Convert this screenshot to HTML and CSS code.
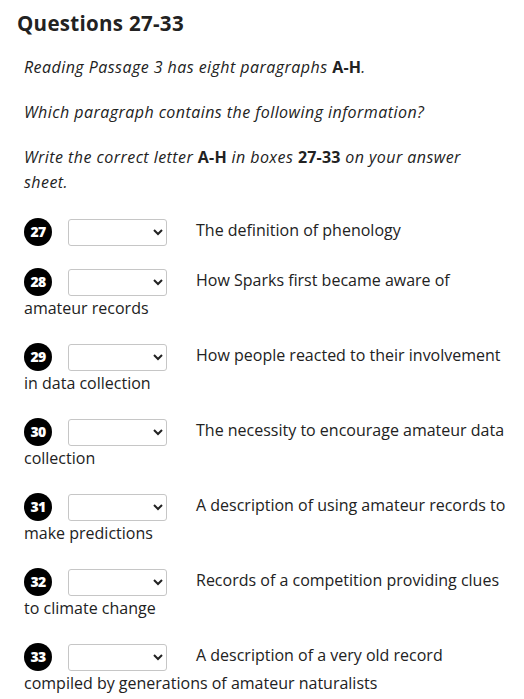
FILE: index.html
```html
<!DOCTYPE html>
<html lang="en">
<head>
<meta charset="utf-8">
<title>Questions 27-33</title>
<link rel="stylesheet" href="styles.css">
</head>
<body>
<main class="page">
  <h2 class="title">Questions 27-33</h2>
  <div class="body">
    <p class="instr"><em>Reading Passage 3 has eight paragraphs <b>A-H</b>.</em></p>
    <p class="instr"><em>Which paragraph contains the following information?</em></p>
    <p class="instr"><em>Write the correct letter <b>A-H</b> in boxes <b>27-33</b> on your answer sheet.</em></p>

    <p class="item"><span class="num">27</span><select class="pick"><option></option><option>A</option><option>B</option><option>C</option><option>D</option><option>E</option><option>F</option><option>G</option><option>H</option></select>The definition of phenology</p>
    <p class="item"><span class="num">28</span><select class="pick"><option></option><option>A</option><option>B</option><option>C</option><option>D</option><option>E</option><option>F</option><option>G</option><option>H</option></select>How Sparks first became aware of amateur records</p>
    <p class="item"><span class="num">29</span><select class="pick"><option></option><option>A</option><option>B</option><option>C</option><option>D</option><option>E</option><option>F</option><option>G</option><option>H</option></select>How people reacted to their involvement in data collection</p>
    <p class="item"><span class="num">30</span><select class="pick"><option></option><option>A</option><option>B</option><option>C</option><option>D</option><option>E</option><option>F</option><option>G</option><option>H</option></select>The necessity to encourage amateur data collection</p>
    <p class="item"><span class="num">31</span><select class="pick"><option></option><option>A</option><option>B</option><option>C</option><option>D</option><option>E</option><option>F</option><option>G</option><option>H</option></select>A description of using amateur records to make predictions</p>
    <p class="item"><span class="num">32</span><select class="pick"><option></option><option>A</option><option>B</option><option>C</option><option>D</option><option>E</option><option>F</option><option>G</option><option>H</option></select>Records of a competition providing clues to climate change</p>
    <p class="item"><span class="num">33</span><select class="pick"><option></option><option>A</option><option>B</option><option>C</option><option>D</option><option>E</option><option>F</option><option>G</option><option>H</option></select>A description of a very old record compiled by generations of amateur naturalists</p>
  </div>
</main>
</body>
</html>
```
FILE: styles.css
```css
html, body {
  margin: 0;
  padding: 0;
  background: #ffffff;
}

.page {
  padding: 9px 12px 0 17px;
  color: #222222;
  font-family: "Open Sans", "Noto Sans", sans-serif;
}

.title {
  margin: 0 0 18px 0;
  font-family: "Open Sans", "DejaVu Sans", sans-serif;
  font-weight: 700;
  font-size: 20.5px;
  line-height: 28px;
  letter-spacing: 0.3px;
  color: #222222;
}

.body {
  padding-left: 7px;
}

.instr {
  margin: 0 0 20px 0;
  padding-right: 22px;
  font-size: 16px;
  line-height: 25px;
  letter-spacing: 0.45px;
}

.instr b {
  font-weight: 700;
  font-style: normal;
  letter-spacing: 0.2px;
}

.item {
  margin: 0 0 19px 0;
  padding-top: 3px;
  font-size: 16px;
  line-height: 25px;
}

.num {
  display: inline-flex;
  align-items: center;
  justify-content: center;
  width: 28px;
  height: 28px;
  border-radius: 50%;
  background: #000000;
  color: #ffffff;
  font-family: "Open Sans", "DejaVu Sans", sans-serif;
  font-weight: 800;
  font-size: 14px;
  letter-spacing: -0.6px;
  vertical-align: middle;
  line-height: 1;
}

.pick {
  width: 99px;
  height: 27px;
  margin: 0 29px 0 16px;
  vertical-align: middle;
  border: 1px solid #c6c6c6;
  border-radius: 3px;
  background: #ffffff;
  font-size: 14px;
  font-family: "Open Sans", sans-serif;
  color: #222222;
}
```
